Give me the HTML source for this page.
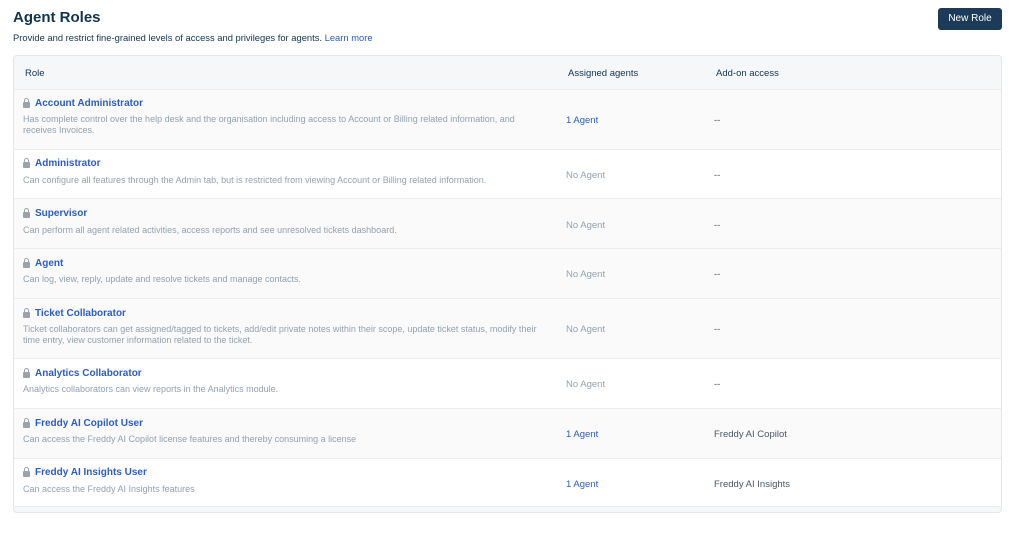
<!DOCTYPE html>
<html><head><style>
*{margin:0;padding:0;box-sizing:border-box}
body{width:1024px;height:533px;background:#fff;font-family:"Liberation Sans",sans-serif;position:relative;overflow:hidden}
h1{position:absolute;left:13px;top:9px;font-size:15px;font-weight:bold;color:#12344d}
.sub{position:absolute;left:13px;top:32px;font-size:9.4px;color:#12344d}
.sub a{color:#2c5cc5;text-decoration:none}
.btn{position:absolute;left:938px;top:8px;width:64px;height:22px;background:#1c3b58;border-radius:3px;color:#fff;font-size:10px;text-align:center;line-height:22px}
.card{position:absolute;left:13px;top:55px;width:989px;height:458px;border:1px solid #e3e6e9;border-radius:4px;background:#f5f7f9;overflow:hidden}
.row{position:absolute;left:0;width:987px;border-bottom:1px solid #ebeef0}
.g{background:#fafafa}.w{background:#fff}
.hd{font-size:9.5px;color:#12344d;position:absolute}
.nm{position:absolute;left:21px;font-size:10px;font-weight:bold;color:#2c5cc5}
.ds{position:absolute;left:9px;font-size:9px;color:#92a2b1;width:527px;line-height:11px}
.lk{position:absolute;left:9px;width:7px;height:6px;background:#9aa3ab;border-radius:1px}
.lk:before{content:"";position:absolute;left:1px;top:-4px;width:3px;height:4px;border:1px solid #9aa3ab;border-bottom:0;border-radius:3px 3px 0 0}
.c2{position:absolute;left:552px;font-size:9.5px;color:#92a2b1}
.c2.b{color:#2c5cc5}
.c3{position:absolute;left:700px;font-size:9.5px;color:#475867}
</style></head><body>
<h1>Agent Roles</h1>
<div class="sub">Provide and restrict fine-grained levels of access and privileges for agents. <a>Learn more</a></div>
<div class="btn">New Role</div>
<div class="card">
<div class="row" style="top:0;height:34px;background:#f5f7f9"><span class="hd" style="left:11px;top:12px">Role</span><span class="hd" style="left:554px;top:12px">Assigned agents</span><span class="hd" style="left:702px;top:12px">Add-on access</span></div>

<div class="row g" style="top:34px;height:60px"><div class="lk" style="top:12px"></div><div class="nm" style="top:8px">Account Administrator</div><div class="ds" style="top:24px">Has complete control over the help desk and the organisation including access to Account or Billing related information, and receives Invoices.</div><div class="c2 b" style="top:25px">1 Agent</div><div class="c3" style="top:25px">--</div></div>

<div class="row w" style="top:94px;height:49px"><div class="lk" style="top:12px"></div><div class="nm" style="top:8px">Administrator</div><div class="ds" style="top:25px">Can configure all features through the Admin tab, but is restricted from viewing Account or Billing related information.</div><div class="c2" style="top:20px">No Agent</div><div class="c3" style="top:20px">--</div></div>

<div class="row g" style="top:143px;height:50px"><div class="lk" style="top:13px"></div><div class="nm" style="top:9px">Supervisor</div><div class="ds" style="top:26px">Can perform all agent related activities, access reports and see unresolved tickets dashboard.</div><div class="c2" style="top:21px">No Agent</div><div class="c3" style="top:21px">--</div></div>

<div class="row g" style="top:193px;height:50px"><div class="lk" style="top:13px"></div><div class="nm" style="top:9px">Agent</div><div class="ds" style="top:25px">Can log, view, reply, update and resolve tickets and manage contacts.</div><div class="c2" style="top:20px">No Agent</div><div class="c3" style="top:20px">--</div></div>

<div class="row g" style="top:243px;height:60px"><div class="lk" style="top:13px"></div><div class="nm" style="top:9px">Ticket Collaborator</div><div class="ds" style="top:25px">Ticket collaborators can get assigned/tagged to tickets, add/edit private notes within their scope, update ticket status, modify their time entry, view customer information related to the ticket.</div><div class="c2" style="top:25px">No Agent</div><div class="c3" style="top:25px">--</div></div>

<div class="row w" style="top:303px;height:50px"><div class="lk" style="top:13px"></div><div class="nm" style="top:9px">Analytics Collaborator</div><div class="ds" style="top:25px">Analytics collaborators can view reports in the Analytics module.</div><div class="c2" style="top:20px">No Agent</div><div class="c3" style="top:20px">--</div></div>

<div class="row g" style="top:353px;height:50px"><div class="lk" style="top:13px"></div><div class="nm" style="top:9px">Freddy AI Copilot User</div><div class="ds" style="top:25px">Can access the Freddy AI Copilot license features and thereby consuming a license</div><div class="c2 b" style="top:20px">1 Agent</div><div class="c3" style="top:20px">Freddy AI Copilot</div></div>

<div class="row w" style="top:403px;height:48px"><div class="lk" style="top:12px"></div><div class="nm" style="top:8px">Freddy AI Insights User</div><div class="ds" style="top:25px">Can access the Freddy AI Insights features</div><div class="c2 b" style="top:20px">1 Agent</div><div class="c3" style="top:20px">Freddy AI Insights</div></div>
</div>
</body></html>
